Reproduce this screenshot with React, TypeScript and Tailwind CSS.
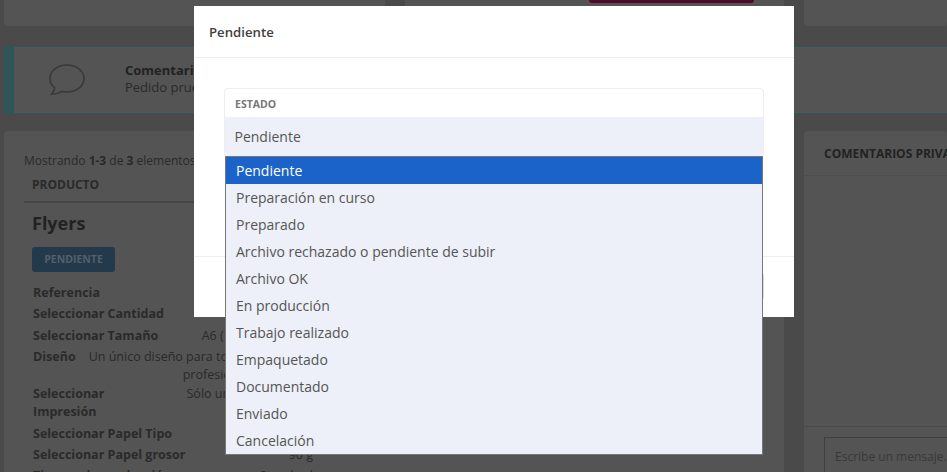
const options = [
  "Pendiente",
  "Preparación en curso",
  "Preparado",
  "Archivo rechazado o pendiente de subir",
  "Archivo OK",
  "En producción",
  "Trabajo realizado",
  "Empaquetado",
  "Documentado",
  "Enviado",
  "Cancelación",
];

function Background() {
  return (
    <div className="flex h-[472px] w-[947px] flex-col overflow-hidden bg-[#4a4a4b] pl-[4px] text-[13px] text-[#2a2a2a]">
      <div className="flex h-[26px] shrink-0">
        <div className="w-[381px] shrink-0 rounded-b bg-[#545454]" />
        <div className="ml-[20px] flex w-[379px] shrink-0 justify-end rounded-b bg-[#545454] pr-[30px]">
          <div className="h-[3px] w-[165px] rounded-b bg-[#4d0a2a]" />
        </div>
        <div className="ml-[20px] min-w-0 flex-1 rounded-b bg-[#545454]" />
      </div>
      <div className="mt-[20px] flex h-[68px] shrink-0 items-center rounded-l border-y border-l-[10px] border-[#2f5558] bg-[#545454]">
        <svg viewBox="0 0 36 32" className="ml-[35px] h-[32px] w-[36px] fill-none stroke-[#3a3a3a] stroke-[1.7]">
          <path d="M18 1c9.500 0 17 6 17 13.500s-7.500 13.500-17 13.500c-2 0-3.600-.2-5.300-.6-2.500 1.500-6 2.800-10 2.800 1.500-2 2.800-4 3-6.600C2.700 21.600 1 18.200 1 14.500 1 7 8.500 1 18 1z" />
        </svg>
        <div className="mb-[2px] ml-[40px] leading-[17px]">
          <div className="text-[13px] font-bold text-[#222]">Comentarios</div>
          <div className="text-[13px]">Pedido prueba</div>
        </div>
      </div>
      <div className="mt-[17px] flex min-h-0 flex-1">
        <div className="w-[780px] shrink-0 rounded-t bg-[#545454] pl-[20px] pt-[21px]">
          <div className="text-[12px] leading-[17px]">
            Mostrando <b>1-3</b> de <b>3</b> elementos
          </div>
          <div className="mt-[8px] w-[300px] border-b-2 border-[#464646] pb-[8px] pl-[8px] text-[12px] font-bold leading-[16px]">
            PRODUCTO
          </div>
          <div className="pl-[8px]">
            <div className="mt-[8px] text-[18px] font-bold leading-[24px] text-[#222]">Flyers</div>
            <div className="mt-[12px] flex h-[25px] w-[83px] items-center justify-center rounded-[3px] bg-[#233a4d] text-[10.500px] font-bold text-[#555f68]">
              PENDIENTE
            </div>
            <div className="ml-[1px] mt-[10px] w-[280px] text-[12.500px] leading-[21px]">
              <div><b>Referencia</b></div>
              <div><b>Seleccionar Cantidad</b></div>
              <div className="mt-[1px] flex justify-between">
                <b>Seleccionar Tamaño</b>
                <span>A6 (105 x 148 mm.)</span>
              </div>
              <div className="mt-[1px] flex leading-[17.500px]">
                <b className="mt-[1px] shrink-0">Diseño</b>
                <span className="ml-[13px] mt-[1px] w-[254px] shrink-0 whitespace-nowrap text-center">
                  Un único diseño para todos los productos de
                  <br />
                  profesional
                </span>
              </div>
              <div className="mt-[2px] flex justify-between leading-[18px]">
                <b className="w-[110px]">Seleccionar Impresión</b>
                <span>Sólo una cara (CMYK).</span>
              </div>
              <div className="mt-[2px] flex justify-between">
                <b>Seleccionar Papel Tipo</b>
                <span>Estucado</span>
              </div>
              <div className="flex justify-between">
                <b>Seleccionar Papel grosor</b>
                <span>90 g</span>
              </div>
              <div className="flex justify-between">
                <b>Tiempo de producción</b>
                <span>Standard</span>
              </div>
            </div>
          </div>
        </div>
        <div className="ml-[20px] flex min-w-0 flex-1 flex-col rounded-t bg-[#545454]">
          <div className="h-[45px] shrink-0 whitespace-nowrap border-b border-[#4e4e4e] pl-[20px] pt-[15px] text-[12px] font-bold leading-[16px] text-[#222]">
            COMENTARIOS PRIVADOS
          </div>
          <div className="flex-1" />
          <div className="h-[46px] shrink-0 border-t border-[#4a4a4a] pl-[20px] pt-[10px]">
            <div className="h-[40px] w-[200px] whitespace-nowrap border border-[#3f3f3f] pl-[10px] pt-[10px] text-[12px] text-[#393939]">
              Escribe un mensaje...
            </div>
          </div>
        </div>
      </div>
    </div>
  );
}

export default function App() {
  return (
    <div className="relative h-[472px] w-[947px] overflow-hidden font-['Open_Sans',sans-serif]">
      <Background />
      <div className="absolute left-[194px] top-[6px] flex h-[311px] w-[600px] flex-col bg-white">
        <div className="flex h-[52px] shrink-0 items-center border-b border-[#eeeeee] pl-[15px] pt-[2px] text-[13.200px] font-semibold text-[#3f3f3f]">
          Pendiente
        </div>
        <div className="px-[30px] pt-[30px]">
          <div className="h-[69px] overflow-hidden rounded border border-[#eeeeee] bg-white">
            <div className="flex h-[28px] items-center pl-[10px] pt-[3px] text-[10.500px] font-bold text-[#777]">ESTADO</div>
            <div className="flex h-[40px] items-center bg-[#edf0f8] pb-[2px] pl-[9.500px] text-[14px] text-[#555]">Pendiente</div>
          </div>
        </div>
        <div className="mt-[99px] flex h-[61px] justify-end border-t border-[#eeeeee] pr-[30px] pt-[15px]">
          <div className="h-[28px] w-[60px] rounded border-r-2 border-[#d5d9e4]" />
        </div>
      </div>
      <div className="absolute left-[225px] top-[156px] w-[538px] border border-[#767676] bg-[#edf0f8] text-[14px] text-[#555]">
        {options.map((o, i) => (
          <div key={o} className={`flex h-[27px] items-center pl-[10px] ${i === 0 ? "bg-[#1b63c8] text-white" : ""}`}>
            {o}
          </div>
        ))}
      </div>
    </div>
  );
}
